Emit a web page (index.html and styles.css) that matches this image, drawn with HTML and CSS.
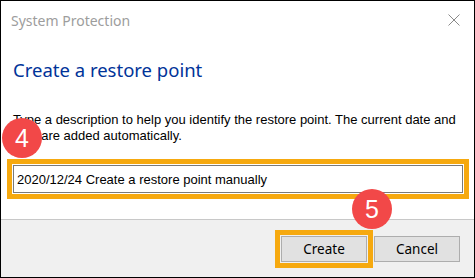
FILE: index.html
```html
<!DOCTYPE html>
<html lang="en">
<head>
    <meta charset="UTF-8">
    <title>System Protection</title>
    <link rel="stylesheet" href="styles.css">
</head>
<body>
    <div class="dialog">
        <!-- Title bar -->
        <div class="title-bar">
            <span class="title">System Protection</span>
            <svg class="close" width="12" height="12" viewBox="0 0 12 12">
                <path d="M0.5 0.5 L11.5 11.5 M11.5 0.5 L0.5 11.5" stroke="#8a8a8a" stroke-width="1" fill="none"/>
            </svg>
        </div>

        <!-- Main content -->
        <div class="content">
            <h2 class="heading">Create a restore point</h2>
            <p class="desc">Type a description to help you identify the restore point. The current date and time are added automatically.</p>
            <div class="highlight field-frame">
                <input type="text" class="field" value="2020/12/24 Create a restore point manually">
            </div>
        </div>

        <!-- Button row -->
        <div class="footer">
            <div class="highlight btn-frame">
                <button class="btn">Create</button>
            </div>
            <button class="btn">Cancel</button>
        </div>

        <!-- Step markers -->
        <span class="step step-4">4</span>
        <span class="step step-5">5</span>
    </div>
</body>
</html>
```

FILE: styles.css
```css
body {
    margin: 0;
    padding: 0;
    background: #fff;
}

.dialog {
    position: relative;
    width: 475px;
    height: 278px;
    box-sizing: border-box;
    border: 1px solid #000;
    display: flex;
    flex-direction: column;
    background: #fff;
    overflow: hidden;
}

/* Title bar */
.title-bar {
    height: 38px;
    display: flex;
    align-items: center;
    justify-content: space-between;
    padding: 0 14px 0 10px;
}

.title {
    font-family: "Noto Sans", sans-serif;
    font-size: 14px;
    color: #9d9d9d;
}

/* Content */
.content {
    flex: 1;
    padding: 0 6px;
}

.heading {
    margin: 17px 0 0 6px;
    font-family: "Noto Sans", sans-serif;
    font-weight: normal;
    font-size: 18.5px;
    color: #003399;
    line-height: 28px;
}

.desc {
    margin: 28px 0 0 6px;
    font-family: "Liberation Sans", Arial, sans-serif;
    font-size: 13px;
    line-height: 16px;
    color: #000;
}

.highlight {
    border: 5px solid #f6a90f;
    padding: 1px;
}

.field-frame {
    margin-top: 15px;
    width: 450px;
}

.field {
    display: block;
    width: 100%;
    height: 28px;
    box-sizing: border-box;
    border: 1px solid #7a7a7a;
    padding: 0 3px;
    font-family: "Liberation Sans", Arial, sans-serif;
    font-size: 13px;
    color: #000;
    outline: none;
}

/* Footer */
.footer {
    height: 57px;
    background: #f0f0f0;
    border-top: 1px solid #c8c8c8;
    display: flex;
    justify-content: flex-end;
    align-items: center;
    gap: 1px;
    padding-right: 14px;
}

.btn-frame {
    padding: 0;
}

.btn {
    width: 86px;
    height: 26px;
    background: #e1e1e1;
    border: 1px solid #adadad;
    font-family: "Noto Sans", sans-serif;
    font-size: 13.5px;
    color: #000;
    padding: 0;
}

.btn-frame .btn {
    margin: 1px;
    display: block;
}

/* Numbered step markers */
.step {
    position: absolute;
    width: 40px;
    height: 40px;
    border-radius: 50%;
    background: #f24848;
    color: #fff;
    font-family: "Liberation Sans", Arial, sans-serif;
    font-size: 25px;
    line-height: 40px;
    text-align: center;
}

.step-4 {
    left: 1px;
    top: 117px;
}

.step-5 {
    left: 351px;
    top: 188px;
}
```
